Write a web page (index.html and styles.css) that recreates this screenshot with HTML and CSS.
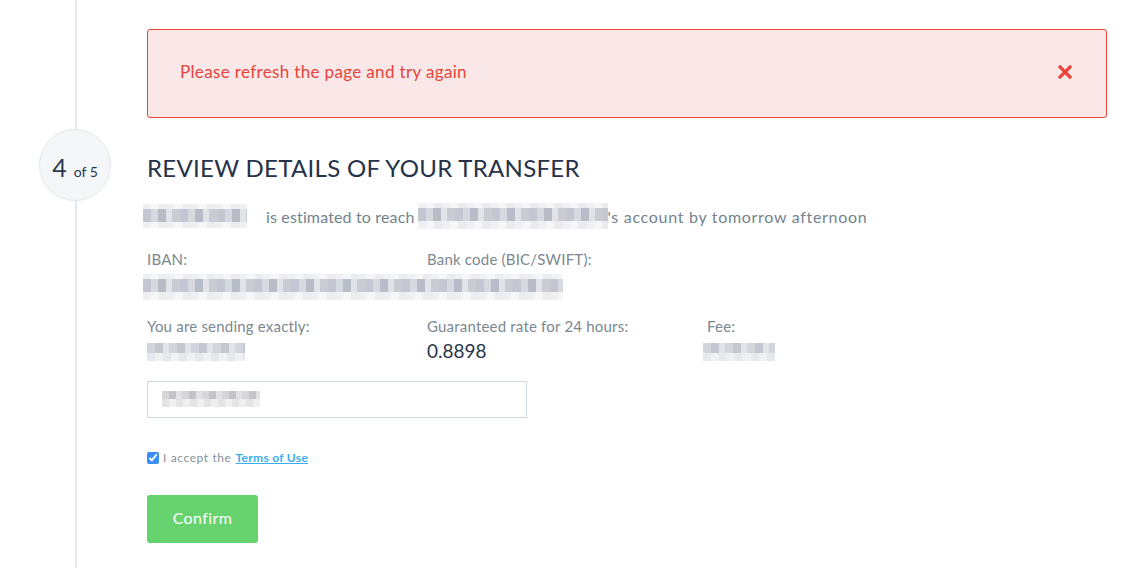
FILE: index.html
```html
<!DOCTYPE html>
<html lang="en">
<head>
    <meta charset="UTF-8">
    <meta name="viewport" content="width=device-width, initial-scale=1.0">
    <title>Review details of your transfer</title>
    <link rel="stylesheet" href="styles.css">
</head>
<body>
    <div class="page">
        <!-- Error message -->
        <div class="alert">
            <span>Please refresh the page and try again</span>
            <svg class="alert-close" width="14" height="14" viewBox="0 0 14 14">
                <path d="M2 2 L12 12 M12 2 L2 12" stroke="#e8443b" stroke-width="3.2" stroke-linecap="square"/>
            </svg>
        </div>

        <!-- Step 4 -->
        <div class="step"><span class="step-num">4</span><span class="step-of">of 5</span></div>
        <h1 class="title">REVIEW DETAILS OF YOUR TRANSFER</h1>

        <div class="content">
            <p class="estimate">
                <span class="blur blur-sender"></span>
                <span class="estimate-text">is estimated to reach</span>
                <span class="blur blur-recipient"></span><span class="estimate-tail">'s account by tomorrow afternoon</span>
            </p>

            <div class="details">
                <div class="field">
                    <div class="label">IBAN:</div>
                    <div class="blur blur-iban"></div>
                </div>
                <div class="field">
                    <div class="label">Bank code (BIC/SWIFT):</div>
                </div>
            </div>

            <div class="details details-amounts">
                <div class="field">
                    <div class="label">You are sending exactly:</div>
                    <div class="blur blur-amount"></div>
                </div>
                <div class="field">
                    <div class="label">Guaranteed rate for 24 hours:</div>
                    <div class="value">0.8898</div>
                </div>
                <div class="field">
                    <div class="label">Fee:</div>
                    <div class="blur blur-fee"></div>
                </div>
            </div>

            <div class="reference">
                <div class="blur blur-ref"></div>
            </div>

            <label class="terms">
                <input type="checkbox" checked>
                I accept the <a href="#">Terms of Use</a>
            </label>

            <button type="button" class="confirm">Confirm</button>
        </div>
    </div>
</body>
</html>
```
FILE: styles.css
```css
body {
    margin: 0;
    font-family: Lato, "Open Sans", sans-serif;
    background: white;
}

.page {
    display: grid;
    grid-template-columns: 147px 960px;
    align-items: center;
    align-content: start;
    min-height: 100vh;
    padding-top: 29px;
    box-sizing: border-box;
    /* linea vertical del timeline */
    background: linear-gradient(#e4e9ee, #e4e9ee) 75px 0 / 2px 100% no-repeat;
}

.alert {
    grid-column: 2;
    display: flex;
    justify-content: space-between;
    align-items: center;
    height: 89px;
    padding: 0 34px 4px 32px;
    box-sizing: border-box;
    background-color: #fae8e8;
    border: 1px solid #e8443b;
    border-radius: 3px;
    color: #e8443b;
    font-size: 17px;
    letter-spacing: 0.35px;
}

.alert-close {
    display: block;
}

.step {
    grid-column: 1;
    width: 70px;
    height: 48px;
    margin: 11px 0 0 39px;
    padding-top: 22px;
    border: 1px solid #e2e7ec;
    border-radius: 50%;
    background-color: #f4f6f8;
    display: flex;
    justify-content: center;
    align-items: baseline;
    color: #2b364b;
}

.step-num {
    font-size: 25px;
    margin-right: 7px;
}

.step-of {
    font-size: 14px;
}

.title {
    grid-column: 2;
    margin: 15px 0 0;
    font-size: 24px;
    font-weight: normal;
    color: #25324a;
    letter-spacing: 0.3px;
}

.content {
    grid-column: 2;
    align-self: start;
}

.estimate {
    display: flex;
    align-items: center;
    margin: 2px 0 0 -4px;
    font-size: 16px;
    color: #73838e;
    white-space: nowrap;
    letter-spacing: 0.15px;
}

.estimate-text {
    margin: 0 3px 0 19px;
}

.estimate-tail {
    letter-spacing: 0.7px;
}

.details {
    display: grid;
    grid-template-columns: 280px 280px 280px;
    margin-top: 21px;
}

.details-amounts {
    margin-top: 17px;
}

.label {
    font-size: 15px;
    color: #7b8891;
    letter-spacing: 0.2px;
    height: 20px;
}

.value {
    font-size: 19px;
    color: #2b364b;
    margin-top: 2px;
}

.reference {
    width: 380px;
    height: 37px;
    border: 1px solid #cdd9e1;
    margin-top: 19px;
    padding: 9px 0 0 14px;
    box-sizing: border-box;
}

.terms {
    display: flex;
    align-items: center;
    margin-top: 32px;
    font-size: 12px;
    color: #86929b;
    letter-spacing: 0.6px;
}

.terms input {
    width: 12px;
    height: 12px;
    margin: 0 4px 0 0;
    accent-color: #3a8ef5;
}

.terms a {
    margin-left: 4px;
    color: #39aef1;
    font-weight: bold;
    letter-spacing: 0.3px;
}

.confirm {
    display: block;
    margin-top: 30px;
    width: 111px;
    height: 48px;
    padding: 0 0 4px;
    border: none;
    border-radius: 3px;
    background-color: #66d36e;
    color: white;
    font-family: inherit;
    font-size: 16px;
    letter-spacing: 0.4px;
    cursor: pointer;
}

/* datos ocultos (pixelados) */
.blur {
    display: inline-block;
    background:
        repeating-linear-gradient(90deg, #c4c7d1 0 8px, #d7d9e0 8px 15px, #b8bcc7 15px 23px, #e2e3e8 23px 29px, #caccd4 29px 37px) 0 5px / 100% 13px no-repeat,
        repeating-linear-gradient(90deg, #eff0f3 0 8px, #f6f6f8 8px 16px, #ececef 16px 24px);
}

.blur-sender {
    width: 104px;
    height: 24px;
}

.blur-recipient {
    width: 190px;
    height: 26px;
}

.blur-iban {
    display: block;
    width: 420px;
    height: 26px;
    margin: 4px 0 0 -4px;
}

.blur-amount,
.blur-fee {
    display: block;
    height: 18px;
    margin-top: 6px;
    background:
        repeating-linear-gradient(90deg, #d3d5dc 0 8px, #c4c7d0 8px 16px, #e3e4e9 16px 22px) 0 0 / 100% 10px no-repeat,
        repeating-linear-gradient(90deg, #e7e8ec 0 8px, #f1f1f4 8px 16px);
}

.blur-amount {
    width: 98px;
}

.blur-fee {
    width: 72px;
    margin-left: -4px;
}

.blur-ref {
    display: block;
    width: 98px;
    height: 16px;
    background:
        repeating-linear-gradient(90deg, #d6d6d9 0 7px, #c3c3c8 7px 14px, #e2e2e5 14px 20px) 0 0 / 100% 8px no-repeat,
        repeating-linear-gradient(90deg, #e4e4e7 0 7px, #efeff1 7px 14px);
}
```
